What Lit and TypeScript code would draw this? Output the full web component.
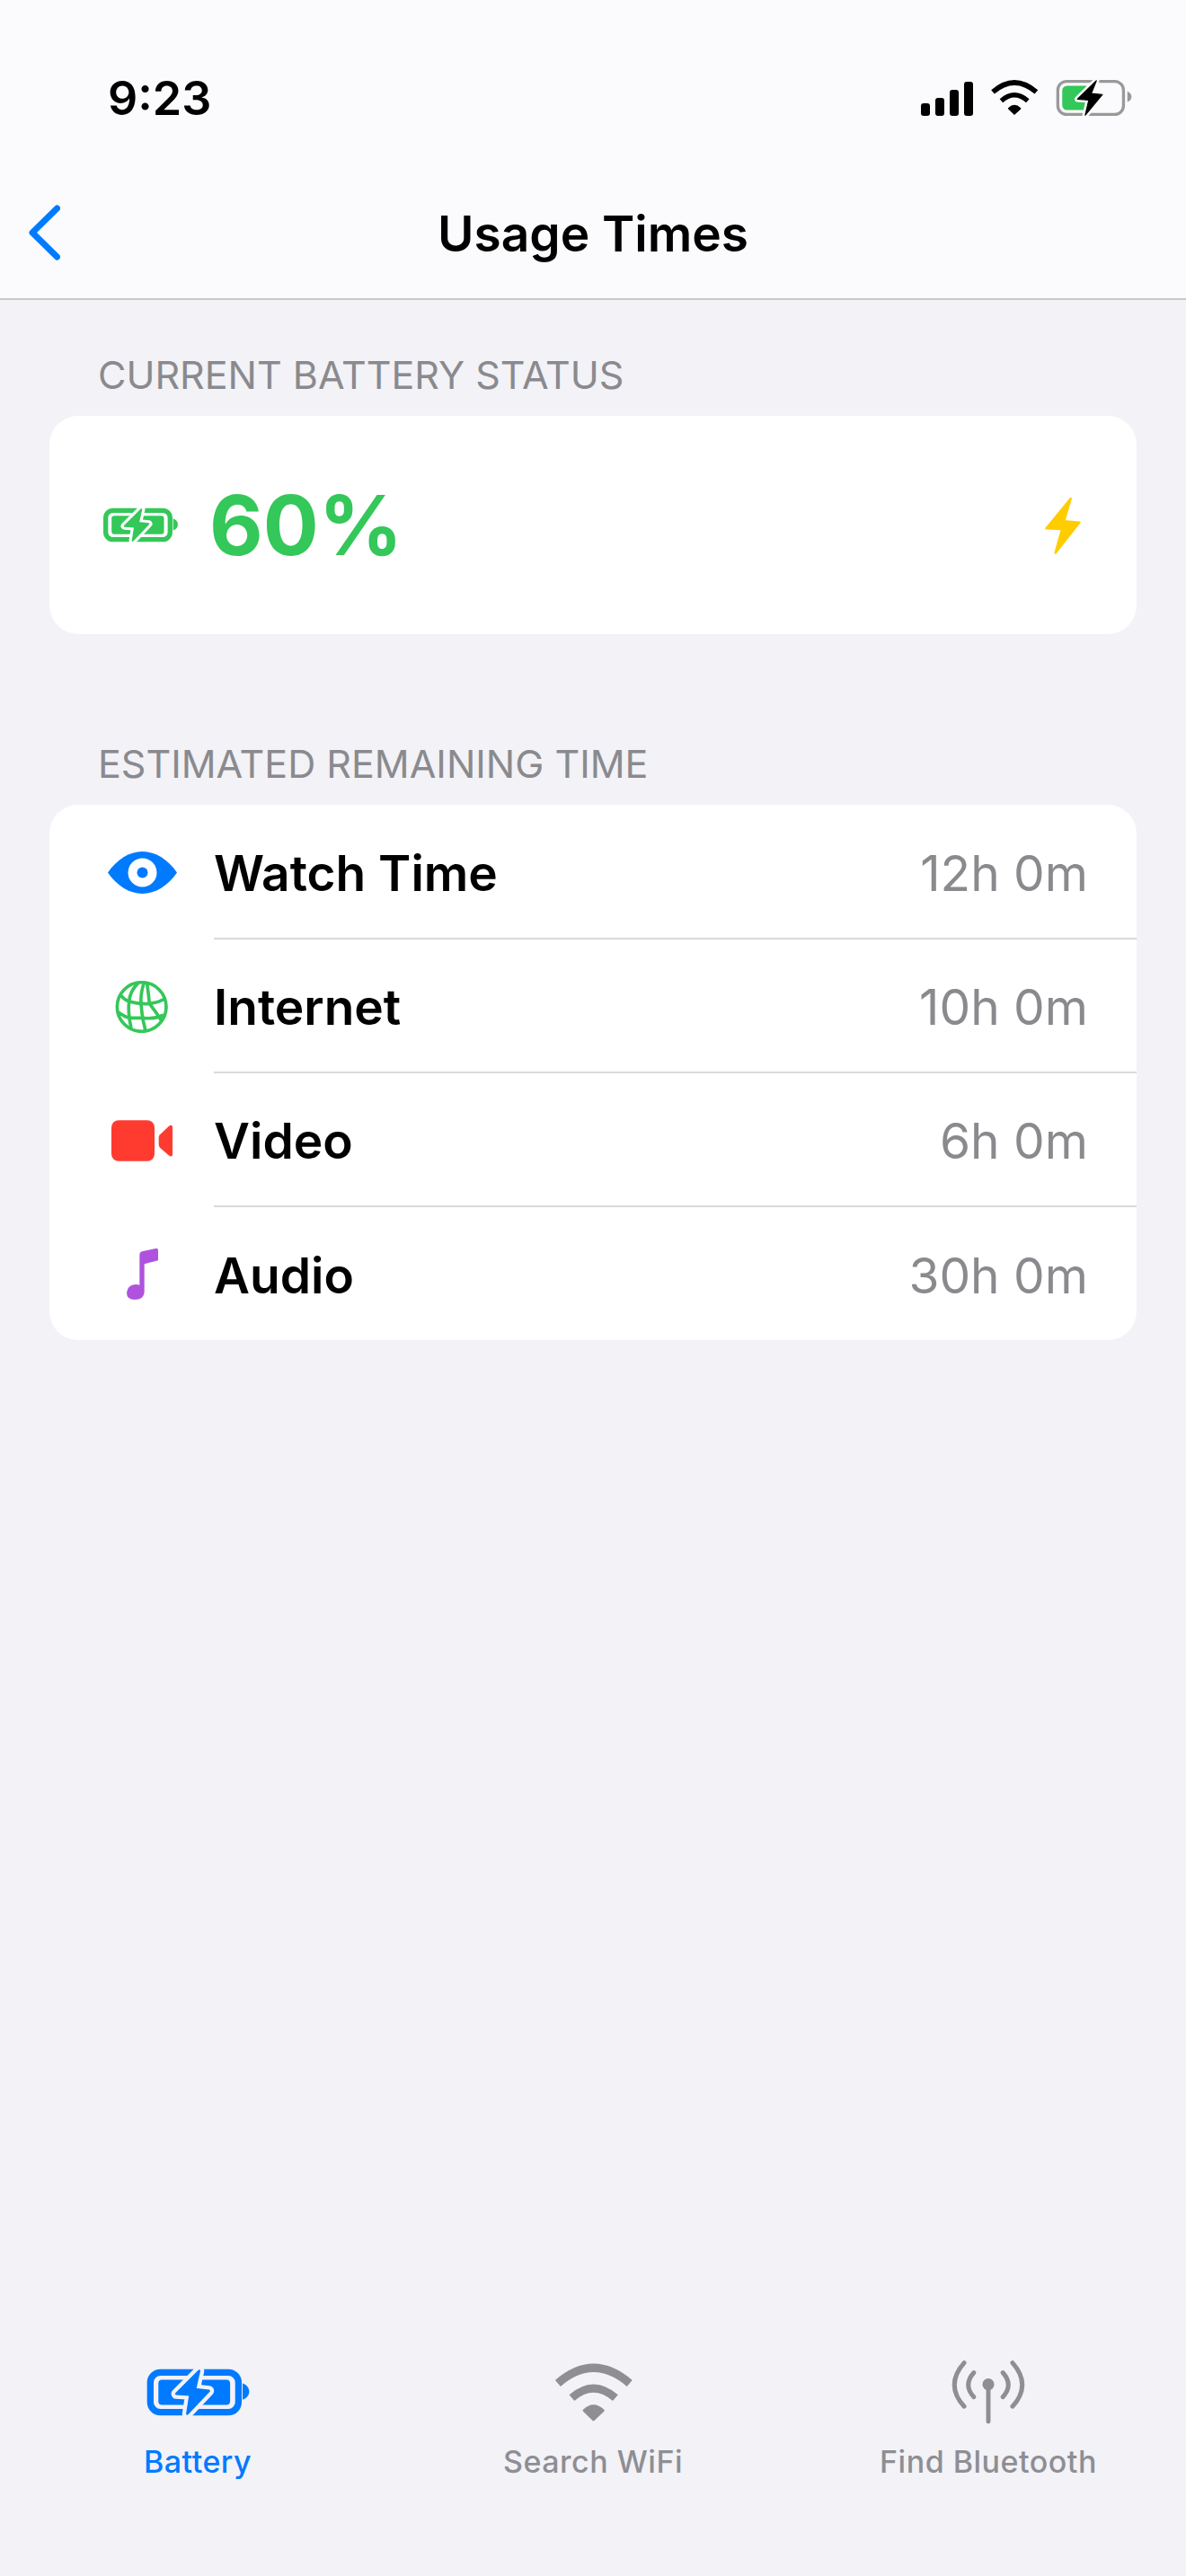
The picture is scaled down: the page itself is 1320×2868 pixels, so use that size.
import { LitElement, html, css } from "lit";
import { customElement } from "lit/decorators.js";

const BLUE = "#007aff", GREEN = "#34c759", GRAY = "#8e8e93";

const battery = (c: string, bg: string) => html`<svg class="fill" viewBox="97 110 343 160">
  <rect x="108" y="123" width="296" height="134" rx="34" fill="none" stroke=${c} stroke-width="22"/>
  <rect x="135" y="148" width="241" height="84" rx="12" fill=${c}/>
  <path d="M418 160 C432 165 440 175 440 188 C440 200 432 210 418 215 Z" fill=${c}/>
  <path d="M272 118 L195 195 L242 198 L232 262 L305 185 L258 180 Z" fill=${bg} stroke=${bg} stroke-width="34" stroke-linejoin="round"/>
  <path d="M272 118 L195 195 L242 198 L232 262 L305 185 L258 180 Z" fill=${c} stroke=${c} stroke-width="8" stroke-linejoin="round"/>
</svg>`;

const wifi = (c: string) => html`<svg class="fill" viewBox="163 95 270 197">
  <path d="M178 163 Q298 59 420 163" fill="none" stroke=${c} stroke-width="28"/>
  <path d="M225 212 Q298 148 372 212" fill="none" stroke=${c} stroke-width="27"/>
  <path d="M266 255 Q298 224 331 255 L298 286 Z" fill=${c} stroke=${c} stroke-width="8" stroke-linejoin="round"/>
</svg>`;

@customElement("app-root")
export class AppRoot extends LitElement {
  static styles = css`
    :host { display: block; width: 1320px; }
    * { box-sizing: border-box; }
    .fill { display: block; width: 100%; height: 100%; }
    .page {
      height: 2868px; background: #f2f2f7; display: flex; flex-direction: column;
      font-family: Inter, "Liberation Sans", sans-serif; color: #000;
    }
    header { height: 334px; background: #fbfbfd; border-bottom: 2px solid #c8c8ca; padding-top: 83px; }
    .status { height: 54px; display: flex; justify-content: space-between; align-items: center; padding: 0 60px 0 120px; }
    .time { font-size: 52px; font-weight: 600; line-height: 54px; }
    .sicons { display: flex; align-items: center; gap: 19px; margin-bottom: 3px; }
    .signal { width: 58px; height: 38px; margin-top: 2px; }
    .swifi { width: 54px; height: 41px; }
    .sbatt { width: 85px; height: 44px; }
    nav { height: 88px; margin-top: 77px; display: grid; grid-template-columns: 1fr auto 1fr; align-items: center; padding: 0 32px; }
    .back { width: 35px; height: 62px; }
    .title { font-size: 55px; font-weight: 600; line-height: 88px; padding-top: 2px; }
    .section { font-size: 43px; line-height: 50px; color: #8a8a8e; padding-left: 109px; }
    .s1 { margin-top: 58px; }
    .s2 { margin-top: 119px; }
    .card { margin: 21px 55px 0; background: #fff; border-radius: 32px; }
    .status-card { height: 243px; display: flex; align-items: center; padding: 0 62px 0 60px; }
    .bicon { width: 83px; height: 39px; }
    .pct { margin-left: 35px; font-size: 92px; font-weight: 700; color: #34c759; line-height: 110px; flex: 1; }
    .bolt { width: 40px; height: 64px; }
    .row { height: 149px; display: flex; align-items: center; padding-left: 63px; }
    .row:first-child { height: 150px; }
    .row:last-child { height: 148px; }
    .ic { width: 80px; display: flex; justify-content: center; margin-right: 40px; }
    .eye { width: 77px; height: 47px; }
    .globe { width: 60px; height: 58px; }
    .video { width: 69px; height: 46px; }
    .music { width: 35px; height: 57px; }
    .body { flex: 1; align-self: stretch; display: flex; align-items: center; justify-content: space-between; padding: 3px 54px 0 0; border-bottom: 2px solid #dadadc; }
    .row:last-child .body { border-bottom: none; }
    .name { font-size: 55px; font-weight: 600; }
    .val { font-size: 55px; color: #8a8a8e; }
    .spacer { flex: 1; }
    .tabs { display: grid; grid-template-columns: repeat(3, 440px); padding-bottom: 105px; }
    .tab { display: flex; flex-direction: column; align-items: center; font-size: 34px; font-weight: 500; color: #8e8e93; letter-spacing: 0.5px; }
    .tab.on { color: #007aff; }
    .slot { height: 80px; display: flex; align-items: center; justify-content: center; margin-bottom: 16px; }
    .label { line-height: 44px; }
    .tb { width: 115px; height: 53px; }
    .tw { width: 89px; height: 65px; }
    .ta { width: 82px; height: 71px; }
  `;

  render() {
    const rows = [
      ["Watch Time", "12h 0m", html`<svg class="eye" viewBox="0 0 77 47"><path d="M0 23.5 C10 9 24 0 38.5 0 C53 0 67 9 77 23.5 C67 38 53 47 38.5 47 C24 47 10 38 0 23.5 Z" fill="${BLUE}"/><circle cx="38.5" cy="23.5" r="16" fill="#fff"/><circle cx="38.5" cy="23.5" r="6" fill="${BLUE}"/></svg>`],
      ["Internet", "10h 0m", html`<svg class="globe" viewBox="88 36 180 174"><g fill="none" stroke="${GREEN}" stroke-width="11" stroke-linejoin="round"><circle cx="177" cy="123" r="82"/><path d="M165 44 Q138 70 135 105 Q130 140 142 195"/><path d="M185 42 Q172 80 175 115 L180 160 L190 203"/><path d="M195 44 Q200 80 203 112 Q225 140 245 172"/><path d="M108 85 Q120 100 135 105 Q170 115 203 112 Q235 108 255 95"/><path d="M98 140 Q125 160 142 160 L180 160 Q220 165 250 150"/></g></svg>`],
      ["Video", "6h 0m", html`<svg class="video" viewBox="78 80 207 137"><rect x="78" y="80" width="144" height="137" rx="24" fill="#ff3b30"/><path d="M240 128 L270 100 Q282 92 282 106 L282 192 Q282 206 270 198 L240 172 Q236 168 236 160 L236 138 Q236 132 240 128 Z" fill="#ff3b30"/></svg>`],
      ["Audio", "30h 0m", html`<svg class="music" viewBox="125 92 105 171"><path d="M168 112 Q168 104 176 102 L222 92 Q230 91 230 98 L230 132 L184 144 L184 238 Q182 263 152 263 Q125 263 125 240 Q127 214 155 212 Q162 212 168 214 Z" fill="#af52de"/></svg>`],
    ];
    return html`<div class="page">
      <header>
        <div class="status">
          <span class="time">9:23</span>
          <div class="sicons">
            <svg class="signal" viewBox="1023 89 58 38"><g fill="#000"><rect x="1023" y="113" width="10" height="14" rx="3"/><rect x="1039" y="107" width="10" height="20" rx="3"/><rect x="1055" y="98" width="10" height="29" rx="3"/><rect x="1071" y="89" width="10" height="38" rx="3"/></g></svg>
            <div class="swifi">${wifi("#000")}</div>
            <svg class="sbatt" viewBox="578 80 258 132">
              <rect x="585" y="90" width="222" height="112" rx="30" fill="none" stroke="#999" stroke-width="10"/>
              <path d="M820 124 Q834 130 834 142 Q834 154 820 160 Z" fill="#999"/>
              <rect x="600" y="105" width="95" height="82" rx="16" fill="#34c759"/>
              <path d="M715 88 L652 150 L690 153 L678 204 L735 135 L698 131 Z" fill="#fbfbfd" stroke="#fbfbfd" stroke-width="20" stroke-linejoin="round"/>
              <path d="M715 88 L652 150 L690 153 L678 204 L735 135 L698 131 Z" fill="#000" stroke="#000" stroke-width="4" stroke-linejoin="round"/>
            </svg>
          </div>
        </div>
        <nav>
          <svg class="back" viewBox="32 227 35 62"><path d="M63.5 231 L36 258 L63.5 285" fill="none" stroke="${BLUE}" stroke-width="7" stroke-linecap="round" stroke-linejoin="round"/></svg>
          <span class="title">Usage Times</span>
          <span></span>
        </nav>
      </header>
      <div class="section s1">CURRENT BATTERY STATUS</div>
      <div class="card status-card">
        <div class="bicon">${battery(GREEN, "#fff")}</div>
        <span class="pct">60%</span>
        <svg class="bolt" viewBox="190 100 118 190"><path d="M275 106 L194 205 L246 207 L224 286 L304 185 L253 181 Z" fill="#ffcc00" stroke="#ffcc00" stroke-width="7" stroke-linejoin="round"/></svg>
      </div>
      <div class="section s2">ESTIMATED REMAINING TIME</div>
      <div class="card">
        ${rows.map((r) => html`<div class="row">
          <div class="ic">${r[2]}</div>
          <div class="body"><span class="name">${r[0]}</span><span class="val">${r[1]}</span></div>
        </div>`)}
      </div>
      <div class="spacer"></div>
      <div class="tabs">
        <div class="tab on"><div class="slot"><div class="tb">${battery(BLUE, "#f2f2f7")}</div></div><span class="label">Battery</span></div>
        <div class="tab"><div class="slot"><div class="tw">${wifi(GRAY)}</div></div><span class="label">Search WiFi</span></div>
        <div class="tab"><div class="slot"><svg class="ta" viewBox="172 84 250 216"><g fill="none" stroke="${GRAY}" stroke-width="15" stroke-linecap="round"><path d="M297 165 L297 291"/><path d="M248 125 Q210 167 248 208"/><path d="M346 125 Q384 167 346 208"/><path d="M215 92 Q149 167 215 240"/><path d="M379 92 Q445 167 379 240"/></g><circle cx="297" cy="165" r="20" fill="${GRAY}"/></svg></div><span class="label">Find Bluetooth</span></div>
      </div>
    </div>`;
  }
}
